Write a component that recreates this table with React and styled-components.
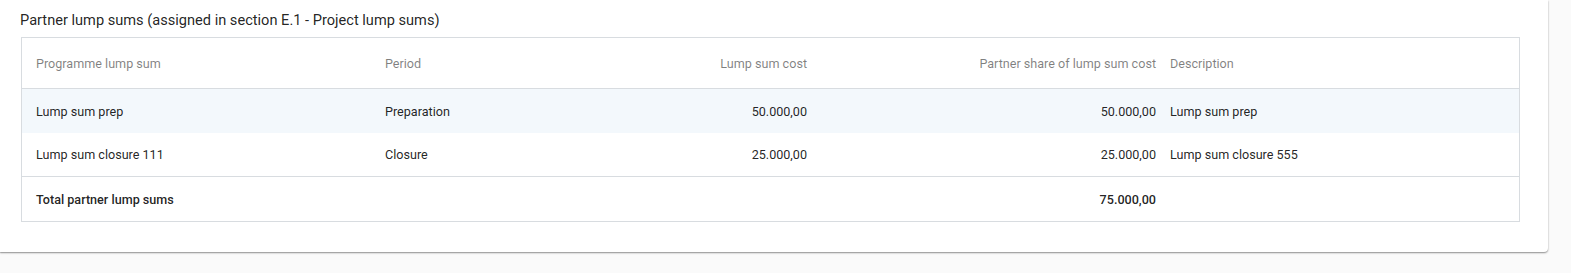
import React from "react";
import styled, { createGlobalStyle } from "styled-components";

const Global = createGlobalStyle`
  html, body { margin: 0; padding: 0; background: #fafafa; }
  body { font-family: Roboto, "Noto Sans", sans-serif; }
`;

const Page = styled.div`
  width: 1571px;
  height: 273px;
  background: #fafafa;
  padding-right: 23px;
  box-sizing: border-box;
`;

const Card = styled.section`
  background: #ffffff;
  border-bottom-right-radius: 4px;
  box-shadow: 0 1px 2px rgba(0, 0, 0, 0.35), 0 1px 1px rgba(0, 0, 0, 0.12);
  padding: 10px 28px 30px 21px;
`;

const Title = styled.h3`
  margin: 0 0 0 -1px;
  font-size: 14.6px;
  font-weight: 400;
  line-height: 20px;
  color: rgba(0, 0, 0, 0.87);
  height: 27px;
`;

const Table = styled.div`
  border: 1px solid #d8dce0;
  display: grid;
  grid-template-columns: 356px 218px 218px 349px 1fr;
`;

const Row = styled.div`
  display: contents;
`;

const Cell = styled.div`
  box-sizing: border-box;
  display: flex;
  align-items: center;
  justify-content: ${(p) => (p.$right ? "flex-end" : "flex-start")};
  height: ${(p) => (p.$head ? "51px" : "44px")};
  padding: 0 7px;
  padding-left: ${(p) => (p.$first ? "14px" : "7px")};
  font-size: 12.6px;
  color: ${(p) => (p.$head ? "rgba(0,0,0,0.5)" : "rgba(0,0,0,0.87)")};
  font-weight: ${(p) => (p.$bold ? 500 : 400)};
  background: ${(p) => (p.$hl ? "#f3f8fc" : "transparent")};
  border-bottom: ${(p) => (p.$noline ? "none" : "1px solid #d8dce0")};
  white-space: nowrap;
`;

const rows = [
  ["Lump sum prep", "Preparation", "50.000,00", "50.000,00", "Lump sum prep"],
  ["Lump sum closure 111", "Closure", "25.000,00", "25.000,00", "Lump sum closure 555"],
];

const head = [
  "Programme lump sum",
  "Period",
  "Lump sum cost",
  "Partner share of lump sum cost",
  "Description",
];

const isRight = (i) => i === 2 || i === 3;

export default function App() {
  return (
    <>
      <Global />
      <Page>
        <Card>
          <Title>Partner lump sums (assigned in section E.1 - Project lump sums)</Title>
          <Table>
            <Row>
              {head.map((h, i) => (
                <Cell key={i} $head $first={i === 0} $right={isRight(i)}>
                  {h}
                </Cell>
              ))}
            </Row>
            {rows.map((r, ri) => (
              <Row key={ri}>
                {r.map((c, i) => (
                  <Cell
                    key={i}
                    $first={i === 0}
                    $right={isRight(i)}
                    $hl={ri === 0}
                    $noline={ri === 0}
                  >
                    {c}
                  </Cell>
                ))}
              </Row>
            ))}
            <Row>
              {["Total partner lump sums", "", "", "75.000,00", ""].map((c, i) => (
                <Cell key={i} $first={i === 0} $right={isRight(i)} $bold $noline>
                  {c}
                </Cell>
              ))}
            </Row>
          </Table>
        </Card>
      </Page>
    </>
  );
}
